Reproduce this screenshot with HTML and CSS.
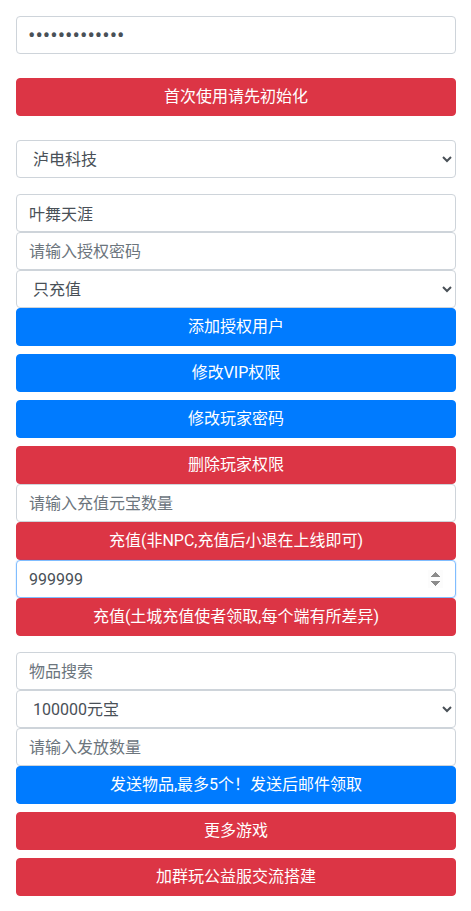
FILE: index.html
```html
<!DOCTYPE html>
<html lang="zh-CN">
<head>
<meta charset="utf-8">
<title>管理</title>
<link rel="stylesheet" href="styles.css">
</head>
<body>
<div class="page">
  <div class="group">
    <input class="field pass" type="password" value="1234567890123">
  </div>
  <div class="group gap-lg">
    <button class="btn danger">首次使用请先初始化</button>
  </div>
  <div class="group gap-lg">
    <select class="field">
      <option>泸电科技</option>
    </select>
  </div>
  <div class="group gap-md">
    <input class="field" type="text" value="叶舞天涯">
    <input class="field" type="text" placeholder="请输入授权密码">
    <select class="field">
      <option>只充值</option>
    </select>
    <button class="btn primary">添加授权用户</button>
    <button class="btn primary">修改VIP权限</button>
    <button class="btn primary">修改玩家密码</button>
    <button class="btn danger">删除玩家权限</button>
    <input class="field" type="text" placeholder="请输入充值元宝数量">
    <button class="btn danger">充值(非NPC,充值后小退在上线即可)</button>
    <input class="field" type="number" value="999999" autofocus>
    <button class="btn danger">充值(土城充值使者领取,每个端有所差异)</button>
  </div>
  <div class="group gap-md">
    <input class="field" type="text" placeholder="物品搜索">
    <select class="field">
      <option>100000元宝</option>
    </select>
    <input class="field" type="text" placeholder="请输入发放数量">
    <button class="btn primary">发送物品,最多5个！发送后邮件领取</button>
    <button class="btn danger">更多游戏</button>
    <button class="btn danger">加群玩公益服交流搭建</button>
  </div>
</div>
</body>
</html>
```
FILE: styles.css
```css
* { box-sizing: border-box; }
html, body { margin: 0; padding: 0; background: #fff; }
body {
  font-family: Roboto, "Noto Sans CJK SC", sans-serif;
  font-size: 16px;
  line-height: 1.5;
  color: #212529;
}
.page {
  padding: 16px 15px 16px 16px;
}
.group {
  display: flex;
  flex-direction: column;
}
.gap-lg { margin-top: 24px; }
.gap-md { margin-top: 16px; }
.field {
  display: block;
  width: 100%;
  height: 38px;
  padding: 6px 12px;
  font-family: inherit;
  font-size: 16px;
  line-height: 1.5;
  color: #495057;
  background: #fff;
  border: 1px solid #ced4da;
  border-radius: 4px;
  margin: 0;
  outline: none;
}
.pass {
  font-size: 22px;
  line-height: 24px;
  padding-left: 11px;
}
.field::placeholder { color: #6c757d; opacity: 1; }
.field:focus { border-color: #80bdff; box-shadow: 0 0 0 1px rgba(0,123,255,0.08); }
.btn {
  display: block;
  width: 100%;
  height: 38px;
  padding: 6px 12px;
  font-family: inherit;
  font-size: 16px;
  line-height: 1.5;
  color: #fff;
  text-align: center;
  border: 1px solid transparent;
  border-radius: 4px;
  margin: 0;
  cursor: pointer;
}
.btn + .btn { margin-top: 8px; }
.danger { background: #dc3545; border-color: #dc3545; }
.primary { background: #007bff; border-color: #007bff; }
```
